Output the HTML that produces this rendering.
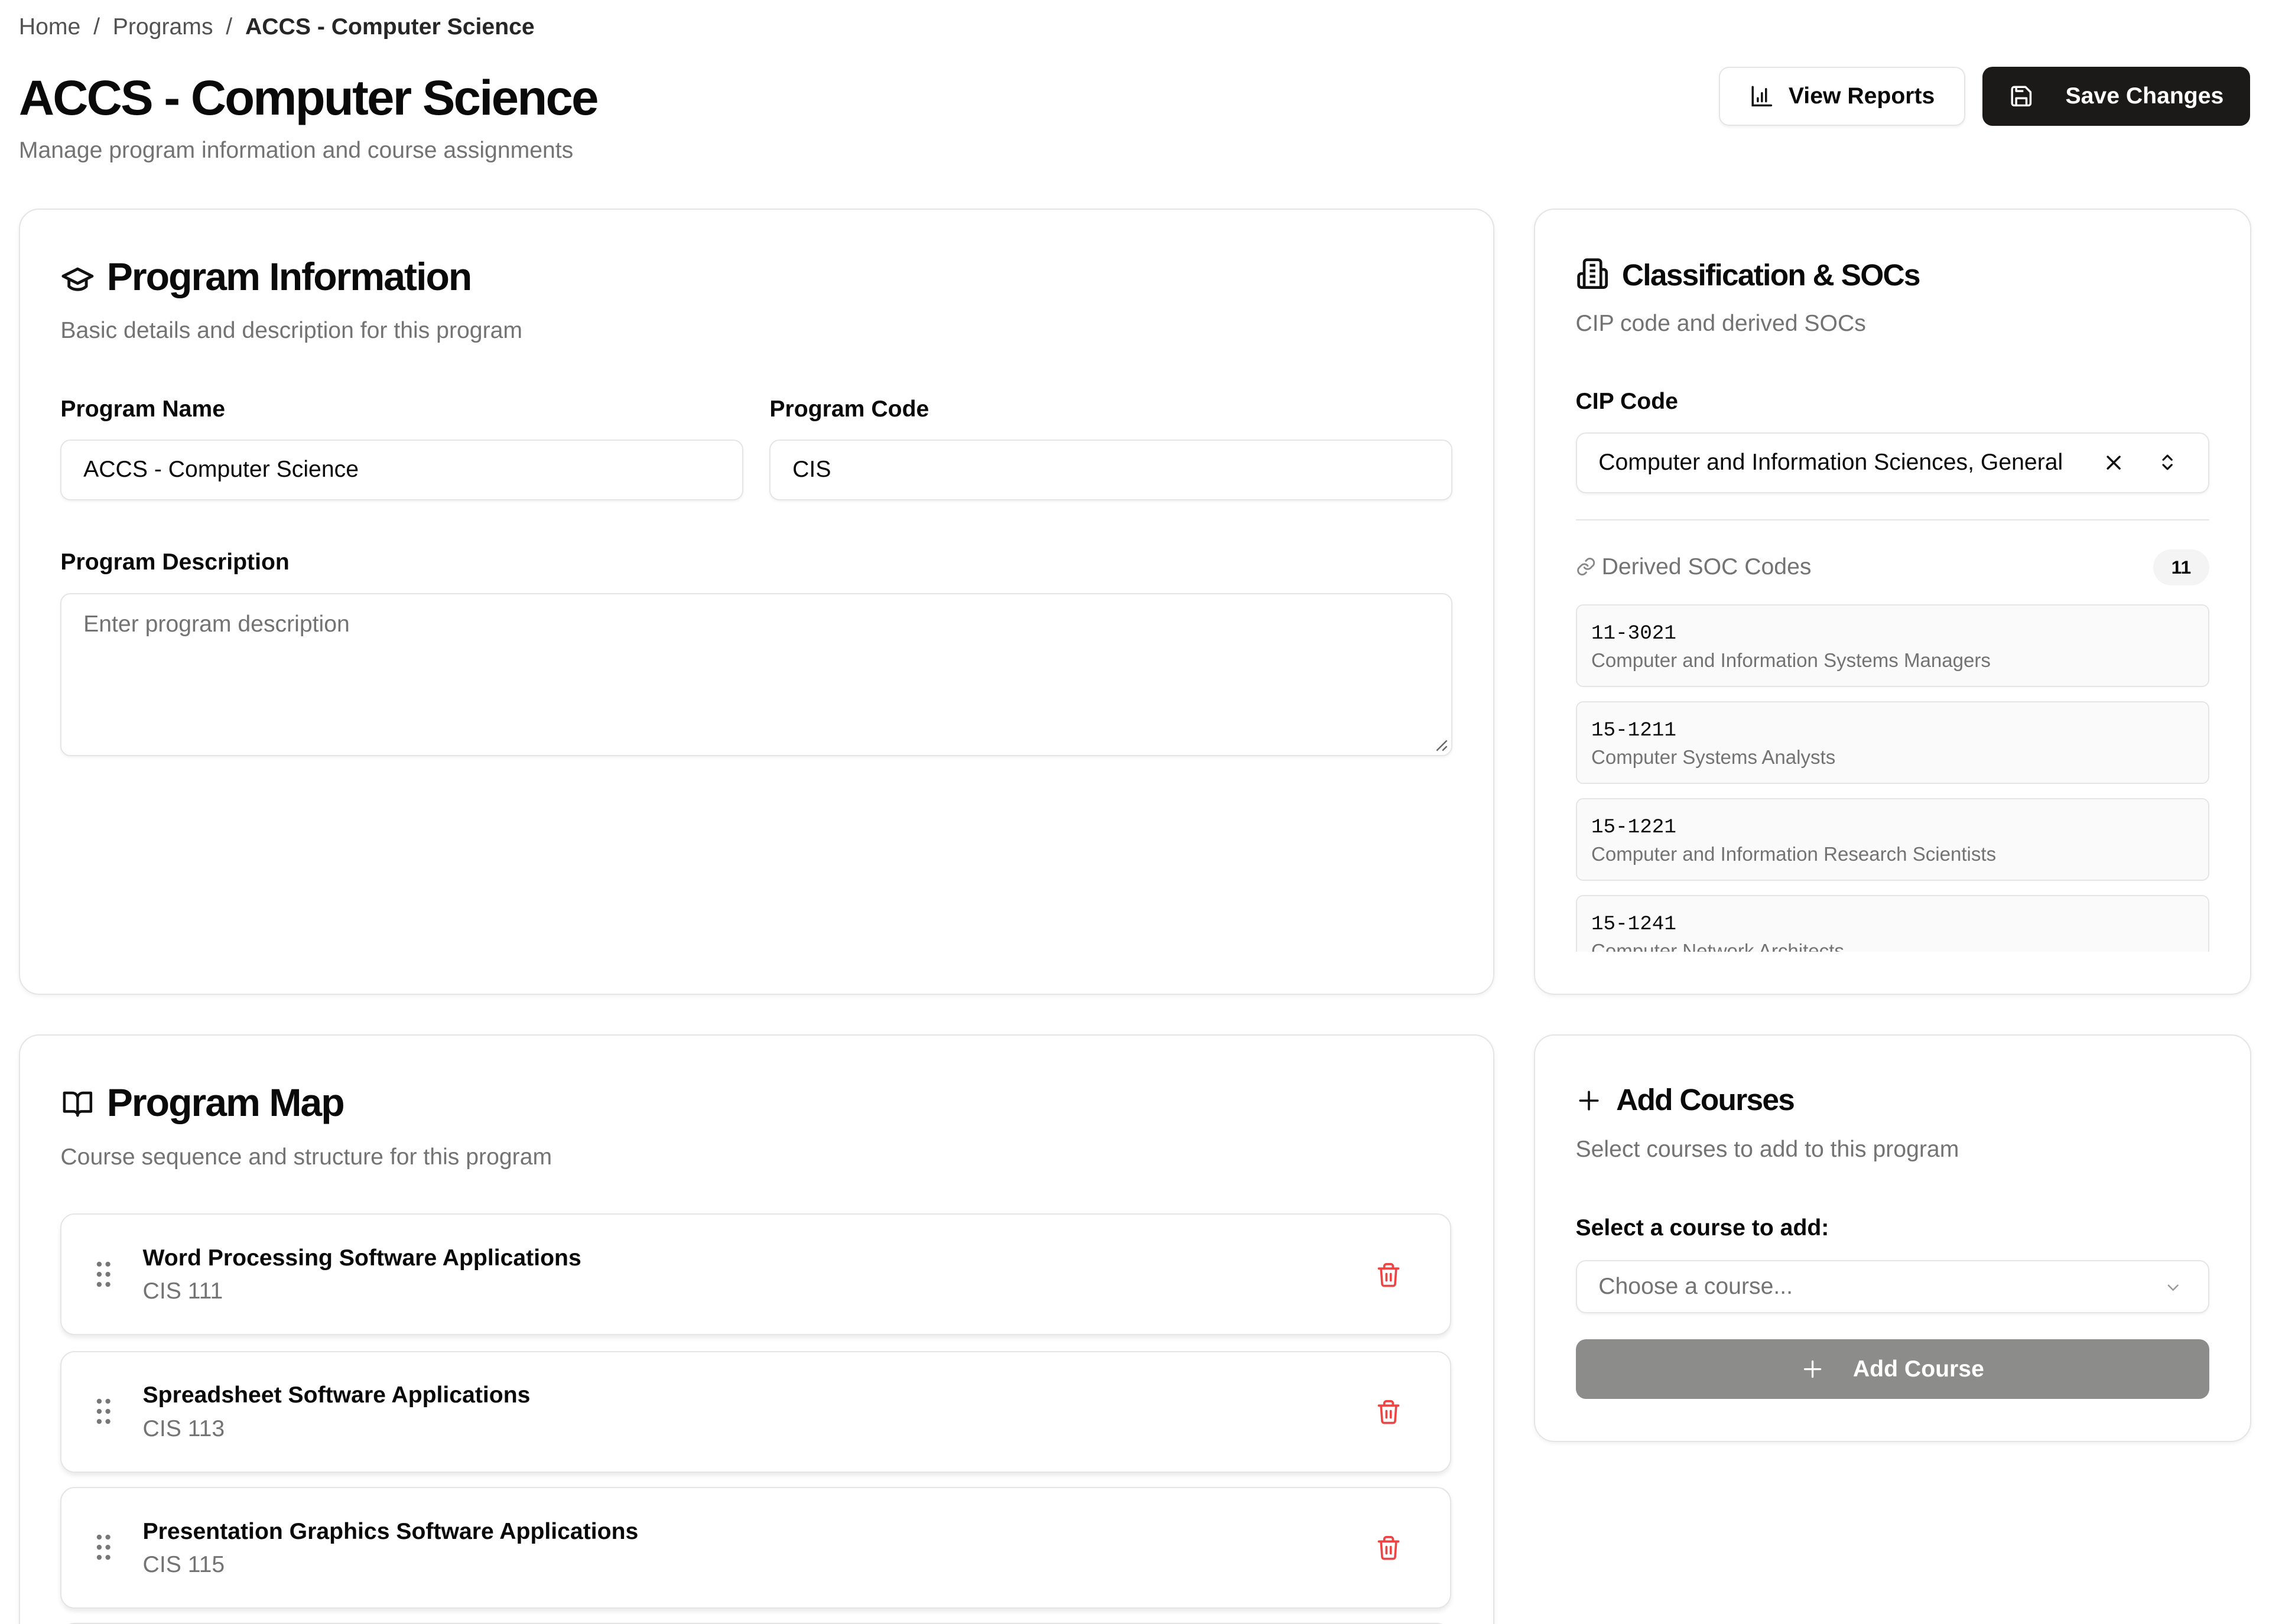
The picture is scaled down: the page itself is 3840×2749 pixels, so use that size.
<!DOCTYPE html>
<html><head><meta charset="utf-8">
<style>
html{margin:0;padding:0;width:3840px;height:2749px;overflow:hidden;background:#fff}
body{margin:0;padding:0;width:1568px;height:1122px;overflow:hidden;zoom:2.449;position:relative;font-family:"Liberation Sans",sans-serif;color:#0a0a0a;background:#fff}
.a{position:absolute}
.card{position:absolute;border:1px solid #e5e5e5;border-radius:14px;background:#fff;box-shadow:0 1px 3px rgba(0,0,0,.06)}
.g{color:#737373}
.lbl{font-size:16px;font-weight:600;color:#0a0a0a}
.inp{position:absolute;border:1px solid #e5e5e5;border-radius:7px;box-shadow:0 1px 2px rgba(0,0,0,.05);background:#fff;font-size:16px;box-sizing:border-box;padding-left:15px;display:flex;align-items:center}
.soc{position:absolute;left:28px;width:438px;height:57px;box-sizing:border-box;border:1px solid #e5e5e5;border-radius:5px;background:#fafafa;padding:10px 10px}
.soc .c{font-family:"Liberation Mono",monospace;font-size:14px;line-height:19px}
.soc .d{font-size:13.5px;color:#737373;line-height:19px}
.item{position:absolute;left:28px;width:961px;height:84px;box-sizing:border-box;border:1px solid #e5e5e5;border-radius:10px;box-shadow:0 2px 3px rgba(0,0,0,.08);background:#fff}
.item .t{position:absolute;left:56px;top:21px;font-size:16px;font-weight:600}
.item .s{position:absolute;left:56px;top:44px;font-size:16px;color:#737373}
.item svg{position:absolute}
</style></head><body>
<div class="a" style="left:13px;top:10px;font-size:16px;color:#525252">Home &nbsp;/&nbsp; Programs &nbsp;/&nbsp; <span style="color:#262626;font-weight:600">ACCS - Computer Science</span></div>
<div class="a" style="left:13px;top:48px;font-size:34px;font-weight:700;letter-spacing:-1.1px">ACCS - Computer Science</div>
<div class="a g" style="left:13px;top:95px;font-size:16px">Manage program information and course assignments</div>

<div class="a" style="left:1188px;top:46px;width:170px;height:41px;border:1px solid #e5e5e5;border-radius:7px;box-shadow:0 1px 2px rgba(0,0,0,.06);box-sizing:border-box;display:flex;align-items:center;justify-content:center;gap:10px;font-size:16px;font-weight:600">
<svg width="17" height="17" viewBox="0 0 24 24" fill="none" stroke="#111" stroke-width="2" stroke-linecap="round"><path d="M3 3v18h18M8 17v-3M12 17V9M16 17V5"/></svg>View Reports</div>
<div class="a" style="left:1370px;top:46px;width:185px;height:41px;background:#1c1a19;border-radius:7px;display:flex;align-items:center;justify-content:center;gap:22px;font-size:16px;font-weight:600;color:#fff">
<svg width="17" height="17" viewBox="0 0 24 24" fill="none" stroke="#fff" stroke-width="2" stroke-linejoin="round"><path d="M5 3h11l5 5v11a2 2 0 0 1-2 2H5a2 2 0 0 1-2-2V5a2 2 0 0 1 2-2z"/><path d="M7 21v-7h10v7M7 3v4h7"/></svg>Save Changes</div>

<!-- card 1 -->
<div class="card" style="left:13px;top:144px;width:1018px;height:542px">
<svg class="a" style="left:28px;top:36px" width="24" height="24" viewBox="0 0 24 24" fill="none" stroke="#111" stroke-width="2" stroke-linejoin="round"><path d="M22 10 12 5 2 10l10 5 10-5z"/><path d="M6 12v5c3 3 9 3 12 0v-5"/></svg>
<div class="a" style="left:60px;top:31px;font-size:27px;font-weight:700;letter-spacing:-0.8px">Program Information</div>
<div class="a g" style="left:28px;top:75px;font-size:16px">Basic details and description for this program</div>
<div class="a lbl" style="left:28px;top:129px">Program Name</div>
<div class="a lbl" style="left:518px;top:129px">Program Code</div>
<div class="inp" style="left:28px;top:159px;width:472px;height:42px">ACCS - Computer Science</div>
<div class="inp" style="left:518px;top:159px;width:472px;height:42px">CIS</div>
<div class="a lbl" style="left:28px;top:235px">Program Description</div>
<div class="inp" style="left:28px;top:265px;width:962px;height:113px;align-items:flex-start;padding-top:12px;color:#737373">Enter program description</div>
<svg class="a" style="left:978px;top:366px" width="9" height="9"><path d="M8 1 1 8M8 5 5 8" stroke="#666" stroke-width="1"/></svg>
</div>

<!-- card 2 -->
<div class="card" style="left:1060px;top:144px;width:494px;height:542px">
<svg class="a" style="left:28px;top:33px" width="23" height="23" viewBox="0 0 24 24" fill="none" stroke="#111" stroke-width="2" stroke-linejoin="round"><path d="M6 22V4a2 2 0 0 1 2-2h8a2 2 0 0 1 2 2v18z"/><path d="M6 12H4a2 2 0 0 0-2 2v6a2 2 0 0 0 2 2h2M18 9h2a2 2 0 0 1 2 2v9a2 2 0 0 1-2 2h-2M10 6h4M10 10h4M10 14h4M10 18h4"/></svg>
<div class="a" style="left:60px;top:33px;font-size:21px;font-weight:700;letter-spacing:-0.7px">Classification &amp; SOCs</div>
<div class="a g" style="left:28px;top:70px;font-size:16px">CIP code and derived SOCs</div>
<div class="a lbl" style="left:28px;top:124px">CIP Code</div>
<div class="inp" style="left:28px;top:154px;width:438px;height:42px">Computer and Information Sciences, General
<svg class="a" style="left:364px;top:13px" width="14" height="14" viewBox="0 0 24 24" stroke="#111" stroke-width="2.4" stroke-linecap="round"><path d="M5 5l14 14M19 5 5 19"/></svg>
<svg class="a" style="left:401px;top:12px" width="14" height="16" viewBox="0 0 24 24" fill="none" stroke="#111" stroke-width="2.2" stroke-linecap="round" stroke-linejoin="round"><path d="M7 9l5-5 5 5M7 15l5 5 5-5"/></svg></div>
<div class="a" style="left:28px;top:214px;width:438px;height:1px;background:#e5e5e5"></div>
<svg class="a" style="left:28px;top:240px" width="14" height="14" viewBox="0 0 24 24" fill="none" stroke="#888" stroke-width="2" stroke-linecap="round"><path d="M10 13a5 5 0 0 0 7.5.5l3-3a5 5 0 0 0-7-7l-1.7 1.7"/><path d="M14 11a5 5 0 0 0-7.5-.5l-3 3a5 5 0 0 0 7 7l1.7-1.7"/></svg>
<div class="a g" style="left:46px;top:238px;font-size:16px">Derived SOC Codes</div>
<div class="a" style="left:427px;top:235px;width:39px;height:25px;border-radius:13px;background:#f4f4f4;font-size:13px;font-weight:600;display:flex;align-items:center;justify-content:center">11</div>
<div class="a" style="left:0;top:273px;width:494px;height:240px;overflow:hidden">
<div class="soc" style="top:0"><div class="c">11-3021</div><div class="d">Computer and Information Systems Managers</div></div>
<div class="soc" style="top:67px"><div class="c">15-1211</div><div class="d">Computer Systems Analysts</div></div>
<div class="soc" style="top:134px"><div class="c">15-1221</div><div class="d">Computer and Information Research Scientists</div></div>
<div class="soc" style="top:201px"><div class="c">15-1241</div><div class="d">Computer Network Architects</div></div>
</div>
</div>

<!-- card 3 -->
<div class="card" style="left:13px;top:715px;width:1018px;height:440px;overflow:hidden">
<svg class="a" style="left:28px;top:36px" width="24" height="22" viewBox="0 0 24 24" fill="none" stroke="#111" stroke-width="2" stroke-linejoin="round"><path d="M2 4h6a4 4 0 0 1 4 4v13a3 3 0 0 0-3-3H2zM22 4h-6a4 4 0 0 0-4 4v13a3 3 0 0 1 3-3h7z"/></svg>
<div class="a" style="left:60px;top:31px;font-size:27px;font-weight:700;letter-spacing:-0.8px">Program Map</div>
<div class="a g" style="left:28px;top:75px;font-size:16px">Course sequence and structure for this program</div>
<div class="item" style="top:123px"><svg style="left:24px;top:32px" width="10" height="18"><g fill="#777"><circle cx="2" cy="2" r="1.7"/><circle cx="8" cy="2" r="1.7"/><circle cx="2" cy="9" r="1.7"/><circle cx="8" cy="9" r="1.7"/><circle cx="2" cy="16" r="1.7"/><circle cx="8" cy="16" r="1.7"/></g></svg><div class="t">Word Processing Software Applications</div><div class="s">CIS 111</div><svg style="left:908px;top:32px" width="18" height="19" viewBox="0 0 24 24" fill="none" stroke="#ef4444" stroke-width="2" stroke-linecap="round"><path d="M3 6h18M8 6V4a2 2 0 0 1 2-2h4a2 2 0 0 1 2 2v2M5 6l1 14a2 2 0 0 0 2 2h8a2 2 0 0 0 2-2l1-14M10 11v6M14 11v6"/></svg></div>
<div class="item" style="top:218px"><svg style="left:24px;top:32px" width="10" height="18"><g fill="#777"><circle cx="2" cy="2" r="1.7"/><circle cx="8" cy="2" r="1.7"/><circle cx="2" cy="9" r="1.7"/><circle cx="8" cy="9" r="1.7"/><circle cx="2" cy="16" r="1.7"/><circle cx="8" cy="16" r="1.7"/></g></svg><div class="t">Spreadsheet Software Applications</div><div class="s">CIS 113</div><svg style="left:908px;top:32px" width="18" height="19" viewBox="0 0 24 24" fill="none" stroke="#ef4444" stroke-width="2" stroke-linecap="round"><path d="M3 6h18M8 6V4a2 2 0 0 1 2-2h4a2 2 0 0 1 2 2v2M5 6l1 14a2 2 0 0 0 2 2h8a2 2 0 0 0 2-2l1-14M10 11v6M14 11v6"/></svg></div>
<div class="item" style="top:312px"><svg style="left:24px;top:32px" width="10" height="18"><g fill="#777"><circle cx="2" cy="2" r="1.7"/><circle cx="8" cy="2" r="1.7"/><circle cx="2" cy="9" r="1.7"/><circle cx="8" cy="9" r="1.7"/><circle cx="2" cy="16" r="1.7"/><circle cx="8" cy="16" r="1.7"/></g></svg><div class="t">Presentation Graphics Software Applications</div><div class="s">CIS 115</div><svg style="left:908px;top:32px" width="18" height="19" viewBox="0 0 24 24" fill="none" stroke="#ef4444" stroke-width="2" stroke-linecap="round"><path d="M3 6h18M8 6V4a2 2 0 0 1 2-2h4a2 2 0 0 1 2 2v2M5 6l1 14a2 2 0 0 0 2 2h8a2 2 0 0 0 2-2l1-14M10 11v6M14 11v6"/></svg></div>
<div class="item" style="top:406px"></div>
</div>

<!-- card 4 -->
<div class="card" style="left:1060px;top:715px;width:494px;height:280px">
<svg class="a" style="left:28px;top:36px" width="18" height="18" viewBox="0 0 24 24" stroke="#111" stroke-width="2" stroke-linecap="round"><path d="M12 4v16M4 12h16"/></svg>
<div class="a" style="left:56px;top:32px;font-size:21px;font-weight:700;letter-spacing:-0.7px">Add Courses</div>
<div class="a g" style="left:28px;top:70px;font-size:16px">Select courses to add to this program</div>
<div class="a lbl" style="left:28px;top:124px">Select a course to add:</div>
<div class="inp" style="left:28px;top:155px;width:438px;height:37px;color:#737373">Choose a course...
<svg class="a" style="left:406px;top:12px" width="12" height="12" viewBox="0 0 24 24" fill="none" stroke="#999" stroke-width="2"><path d="M5 9l7 7 7-7"/></svg></div>
<div class="a" style="left:28px;top:210px;width:438px;height:41px;background:#8c8c8b;border-radius:7px;display:flex;align-items:center;justify-content:center;gap:20px;color:#fff;font-size:16px;font-weight:600">
<svg width="16" height="16" viewBox="0 0 24 24" stroke="#fff" stroke-width="2" stroke-linecap="round"><path d="M12 4v16M4 12h16"/></svg>Add Course</div>
</div>
</body></html>
